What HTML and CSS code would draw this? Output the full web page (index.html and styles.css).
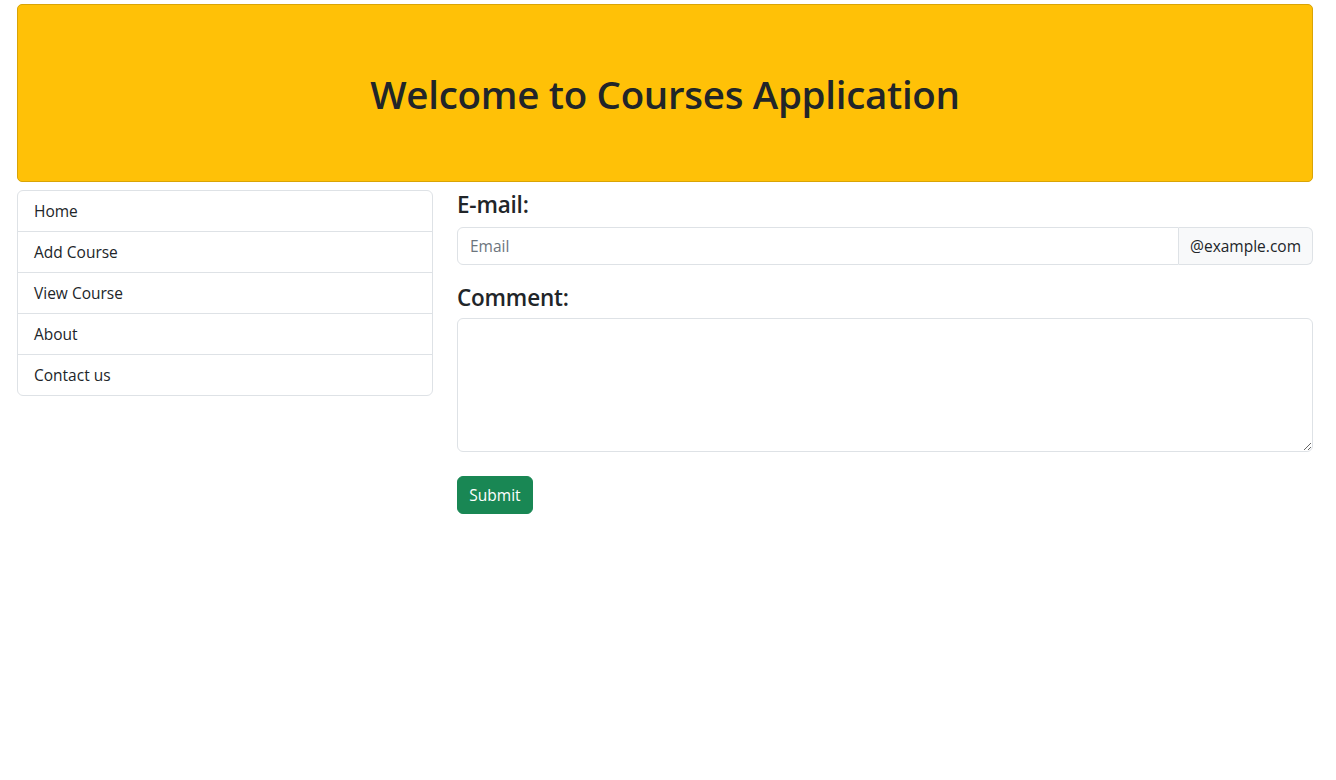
FILE: index.html
```html
<!DOCTYPE html>
<html lang="en">
<head>
<meta charset="utf-8">
<title>Courses Application</title>
<link rel="stylesheet" href="styles.css">
</head>
<body>
<div class="page">
  <header class="banner">
    <h1 class="banner-title">Welcome to Courses Application</h1>
  </header>
  <div class="layout">
    <nav class="side">
      <ul class="menu">
        <li class="menu-item">Home</li>
        <li class="menu-item">Add Course</li>
        <li class="menu-item">View Course</li>
        <li class="menu-item">About</li>
        <li class="menu-item">Contact us</li>
      </ul>
    </nav>
    <main class="content">
      <form class="form">
        <label class="label" for="email">E-mail:</label>
        <div class="input-group">
          <input class="input" id="email" type="text" placeholder="Email">
          <span class="addon">@example.com</span>
        </div>
        <label class="label label-comment" for="comment">Comment:</label>
        <textarea class="textarea" id="comment"></textarea>
        <button class="btn" type="button">Submit</button>
      </form>
    </main>
  </div>
</div>
</body>
</html>
```

FILE: styles.css
```css
* { box-sizing: border-box; }
html, body { margin: 0; padding: 0; background: #fff; }
body {
  font-family: "Open Sans", "Noto Sans", "Liberation Sans", sans-serif;
  font-size: 16px;
  line-height: 1.5;
  color: #212529;
}
.page {
  padding: 4px 23px 0 17px;
}
.banner {
  background: #ffc107;
  border: 1px solid #d9a406;
  border-radius: 5px;
  height: 178px;
  padding-top: 3px;
  display: flex;
  align-items: center;
  justify-content: center;
}
.banner-title {
  margin: 0;
  font-size: 38.5px;
  font-weight: 600;
  line-height: 1.2;
  letter-spacing: -0.3px;
  color: #212529;
}
.layout {
  display: flex;
  gap: 24px;
  margin-top: 8px;
}
.side { width: 416px; flex: none; }
.content { flex: 1; min-width: 0; }
.menu {
  list-style: none;
  margin: 0;
  padding: 0;
  border: 1px solid #dee2e6;
  border-radius: 6px;
}
.menu-item {
  padding: 8px 16px;
  height: 41px;
  font-size: 15.5px;
  line-height: 24px;
  border-bottom: 1px solid #dee2e6;
}
.menu-item:last-child { border-bottom: none; height: 40px; }
.form { display: flex; flex-direction: column; align-items: flex-start; }
.label {
  display: block;
  font-size: 22.5px;
  font-weight: 600;
  line-height: 30px;
  margin-bottom: 7px;
  letter-spacing: -0.2px;
}
.label-comment { margin-bottom: 5px; }
.input-group {
  display: flex;
  width: 100%;
  height: 38px;
  margin-bottom: 18px;
}
.input {
  flex: 1;
  min-width: 0;
  border: 1px solid #dee2e6;
  border-radius: 6px 0 0 6px;
  padding: 7px 12px 5px;
  font: inherit;
  font-size: 15.5px;
  color: #212529;
  outline: none;
}
.input::placeholder { color: #6c757d; }
.addon {
  display: flex;
  align-items: center;
  padding: 7px 12px 5px;
  font-size: 15.5px;
  background: #f8f9fa;
  border: 1px solid #dee2e6;
  border-left: none;
  border-radius: 0 6px 6px 0;
  width: 134px;
  justify-content: center;
}
.textarea {
  display: block;
  width: 100%;
  height: 134px;
  border: 1px solid #dee2e6;
  border-radius: 6px;
  padding: 6px 12px;
  font: inherit;
  resize: vertical;
  margin-bottom: 24px;
  outline: none;
}
.btn {
  background: #198754;
  color: #fff;
  border: 1px solid #198754;
  border-radius: 6px;
  height: 38px;
  width: 76px;
  padding: 1px 0 0;
  font: inherit;
  font-size: 15.5px;
  cursor: pointer;
}
```
